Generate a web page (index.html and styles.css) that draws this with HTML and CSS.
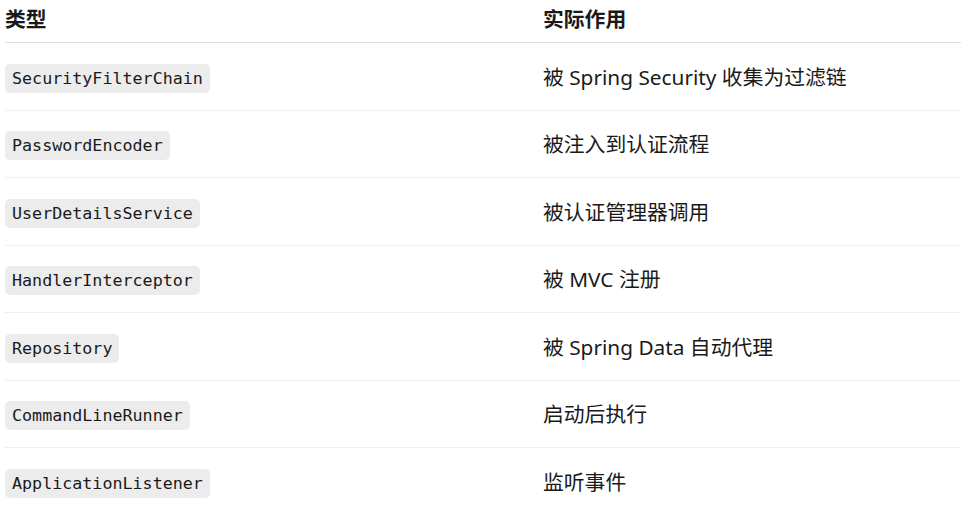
FILE: index.html
```html
<!DOCTYPE html>
<html lang="zh">
<head>
<meta charset="utf-8">
<link rel="stylesheet" href="styles.css">
</head>
<body>
<div class="table">
  <div class="row head">
    <div class="cell">类型</div>
    <div class="cell">实际作用</div>
  </div>
  <div class="row">
    <div class="cell"><code class="pill">SecurityFilterChain</code></div>
    <div class="cell">被 Spring Security 收集为过滤链</div>
  </div>
  <div class="row">
    <div class="cell"><code class="pill">PasswordEncoder</code></div>
    <div class="cell">被注入到认证流程</div>
  </div>
  <div class="row">
    <div class="cell"><code class="pill">UserDetailsService</code></div>
    <div class="cell">被认证管理器调用</div>
  </div>
  <div class="row">
    <div class="cell"><code class="pill">HandlerInterceptor</code></div>
    <div class="cell">被 MVC 注册</div>
  </div>
  <div class="row">
    <div class="cell"><code class="pill">Repository</code></div>
    <div class="cell">被 Spring Data 自动代理</div>
  </div>
  <div class="row">
    <div class="cell"><code class="pill">CommandLineRunner</code></div>
    <div class="cell">启动后执行</div>
  </div>
  <div class="row last">
    <div class="cell"><code class="pill">ApplicationListener</code></div>
    <div class="cell">监听事件</div>
  </div>
</div>
</body>
</html>
```

FILE: styles.css
```css
html, body {
  margin: 0;
  padding: 0;
  background: #ffffff;
}
body {
  font-family: "Noto Sans", "Noto Sans CJK SC", sans-serif;
  font-size: 20.8px;
  color: #1a1a1a;
}
.table {
  margin-left: 5px;
  display: flex;
  flex-direction: column;
}
.row {
  display: grid;
  grid-template-columns: 538px 1fr;
  align-items: center;
  padding-top: 1px;
  box-sizing: border-box;
  height: 67.5px;
  border-bottom: 1px solid #efefef;
}
.row.head {
  height: 43px;
  padding-top: 0;
  align-items: start;
  border-bottom: 1px solid #dedede;
  font-weight: 700;
}
.row.head .cell {
  padding-top: 4px;
  line-height: 30px;
}
.row.last {
  border-bottom: none;
}
.cell {
  line-height: 30px;
}
.latin {
  letter-spacing: 0.2px;
}
.pill {
  display: inline-block;
  font-family: "DejaVu Sans Mono", monospace;
  font-size: 16.7px;
  line-height: 29px;
  padding: 0 7px;
  background: #ececec;
  border-radius: 5px;
  color: #1a1a1a;
}
```
